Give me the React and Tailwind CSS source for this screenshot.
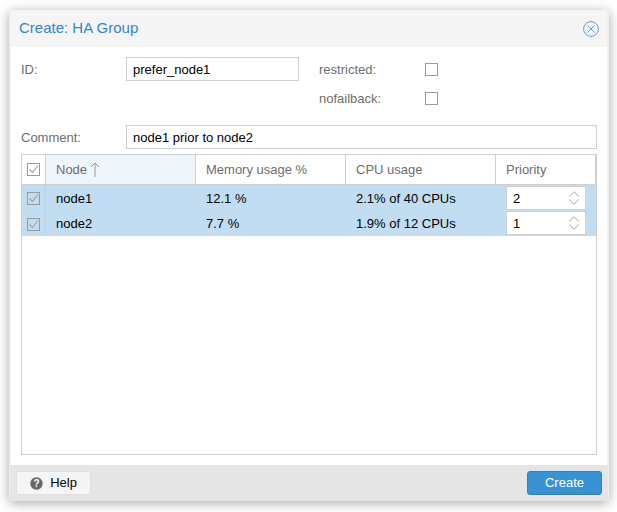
import { ChevronUp, ChevronDown } from 'lucide-react'

const rows = [
  { node: 'node1', mem: '12.1 %', cpu: '2.1% of 40 CPUs', prio: '2' },
  { node: 'node2', mem: '7.7 %', cpu: '1.9% of 12 CPUs', prio: '1' },
]

function Check() {
  return (
    <div className="w-[13px] h-[13px] border border-[#999999] flex items-center justify-center">
      <svg width="11" height="11" viewBox="0 0 11 11" fill="none">
        <path d="M1.5 5.5 L4.5 8.5 L10 1.5" stroke="#9e9e9e" strokeWidth="1.1" />
      </svg>
    </div>
  )
}

function Spinner({ value }) {
  return (
    <div className="w-[80px] h-[24px] bg-white border border-[#cfcfcf] flex items-center pl-[6px] pr-[2px] text-black">
      <span className="flex-1 pt-[2px]">{value}</span>
      <div className="flex flex-col text-[#b4b4b4]">
        <ChevronUp size={18} strokeWidth={1.4} className="-mb-[5px]" />
        <ChevronDown size={18} strokeWidth={1.4} className="-mt-[5px]" />
      </div>
    </div>
  )
}

export default function App() {
  return (
    <div className="h-[512px] pt-[10px] pl-[9px] bg-white overflow-hidden text-[13px] font-['Liberation_Sans',Arial,sans-serif]">
      <div className="w-[600px] h-[491px] flex flex-col bg-[#f5f5f5] rounded-[4px] border-x-2 border-[#f0f0f0] shadow-[0_2px_12px_rgba(0,0,0,0.35)]">
        <div className="h-[37px] shrink-0 flex items-center justify-between pl-[8px] pr-[8px]">
          <span className="text-[15px] text-[#2f86cf]">Create: HA Group</span>
          <svg width="16" height="16" viewBox="0 0 16 16" fill="none" stroke="#5f9fd6" strokeWidth="1">
            <circle cx="8" cy="8" r="7.4" />
            <path d="M4.4 4.4 L11.6 11.6 M11.6 4.4 L4.4 11.6" />
          </svg>
        </div>

        <div className="flex-1 bg-white pl-[10px] pr-[10px] pt-[10px] flex flex-col min-h-0">
          <div className="flex h-[68px]">
            <div className="w-[105px] h-[24px] pt-[2px] flex items-center text-[#6e6e6e]">ID:</div>
            <div className="w-[173px] h-[24px] border border-[#cfcfcf] flex items-center pl-[6px] pt-[2px] text-black">prefer_node1</div>
            <div className="ml-[20px] flex flex-col">
              <div className="h-[24px] flex items-center text-[#6e6e6e]">
                <span className="w-[106px] mt-[2px]">restricted:</span>
                <span className="w-[13px] h-[13px] border border-[#9c9c9c]" />
              </div>
              <div className="h-[24px] mt-[5px] flex items-center text-[#6e6e6e]">
                <span className="w-[106px] mt-[2px]">nofailback:</span>
                <span className="w-[13px] h-[13px] border border-[#9c9c9c]" />
              </div>
            </div>
          </div>

          <div className="flex h-[24px]">
            <div className="w-[105px] pt-[2px] flex items-center text-[#6e6e6e]">Comment:</div>
            <div className="w-[471px] border border-[#cfcfcf] flex items-center pl-[6px] pt-[2px] text-black">node1 prior to node2</div>
          </div>

          <div className="mt-[5px] w-[576px] h-[301px] border border-[#cfcfcf]">
            <div className="h-[30px] flex border-b border-[#cfcfcf] text-[#6e6e6e]">
              <div className="w-[24px] flex items-center justify-center border-r border-[#cfcfcf]"><Check /></div>
              <div className="w-[150px] flex items-center pl-[10px] bg-[#eef5fb] border-r border-[#cfcfcf]">
                Node
                <svg width="10" height="16" viewBox="0 0 10 16" fill="none" stroke="#9a9a9a" strokeWidth="1" className="ml-[3px]">
                  <path d="M5 1 V15 M1 5 L5 1 L9 5" />
                </svg>
              </div>
              <div className="w-[150px] flex items-center pl-[10px] border-r border-[#cfcfcf]">Memory usage %</div>
              <div className="w-[150px] flex items-center pl-[10px] border-r border-[#cfcfcf]">CPU usage</div>
              <div className="flex-1 flex items-center pl-[10px] border-r border-[#cfcfcf]">Priority</div>
            </div>
            {rows.map((r, i) => (
              <div key={r.node} className={`flex items-center bg-[#c2ddf2] text-black ${i == 0 ? 'h-[25px]' : 'h-[26px]'}`}>
                <div className="w-[24px] h-full pt-[2px] flex items-center justify-center border-r border-[#b8d3e8]"><Check /></div>
                <div className="w-[150px] pl-[10px] pt-[2px]">{r.node}</div>
                <div className="w-[150px] pl-[10px] pt-[2px]">{r.mem}</div>
                <div className="w-[150px] pl-[10px] pt-[2px]">{r.cpu}</div>
                <div className="pl-[10px]"><Spinner value={r.prio} /></div>
              </div>
            ))}
          </div>
        </div>

        <div className="h-[36px] shrink-0 bg-[#e5e5e5] -mx-[1px] flex items-center justify-between px-[6px] rounded-b-[3px]">
          <div className="w-[75px] h-[24px] bg-[#f5f5f5] border border-[#dedede] rounded-[3px] flex items-center justify-center gap-[7px] text-black">
            <svg width="13" height="13" viewBox="0 0 13 13">
              <circle cx="6.5" cy="6.5" r="6.2" fill="#686868" />
              <text x="6.5" y="10" textAnchor="middle" fontSize="10" fontWeight="700" fill="#fff" fontFamily="Liberation Sans">?</text>
            </svg>
            Help
          </div>
          <div className="w-[75px] h-[24px] bg-[#3892d4] border border-[#2f83c4] rounded-[3px] flex items-center justify-center text-white">Create</div>
        </div>
      </div>
    </div>
  )
}
